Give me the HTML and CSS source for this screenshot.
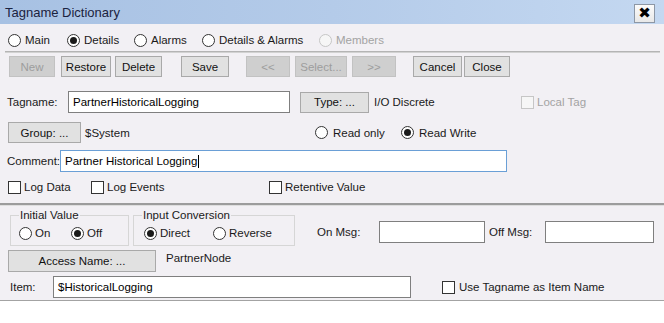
FILE: index.html
```html
<!DOCTYPE html>
<html>
<head>
<meta charset="utf-8">
<link rel="stylesheet" href="styles.css">
</head>
<body>
<div class="dialog">
  <div class="titlebar">
    <span class="title">Tagname Dictionary</span>
    <span class="closebtn">&#x2716;</span>
  </div>

  <div class="tabs">
    <label class="radio w-main"><span class="dot"></span>Main</label>
    <label class="radio w-details"><span class="dot on"></span>Details</label>
    <label class="radio w-alarms"><span class="dot"></span>Alarms</label>
    <label class="radio w-da"><span class="dot"></span>Details &amp; Alarms</label>
    <label class="radio disabled"><span class="dot"></span>Members</label>
  </div>
  <div class="sep-top"></div>

  <div class="toolbar">
    <span class="btn dis b-new">New</span>
    <span class="btn b-restore">Restore</span>
    <span class="btn b-delete">Delete</span>
    <span class="btn b-save">Save</span>
    <span class="btn dis b-prev">&lt;&lt;</span>
    <span class="btn dis b-select">Select...</span>
    <span class="btn dis b-next">&gt;&gt;</span>
    <span class="btn b-cancel">Cancel</span>
    <span class="btn b-close">Close</span>
  </div>

  <div class="row row-tag">
    <span class="lbl l-tag">Tagname:</span>
    <span class="input i-tag">PartnerHistoricalLogging</span>
    <span class="btn b-type">Type: ...</span>
    <span class="txt t-type">I/O Discrete</span>
    <label class="check disabled"><span class="box"></span>Local Tag</label>
  </div>

  <div class="row row-group">
    <span class="btn b-group">Group: ...</span>
    <span class="txt t-sys">$System</span>
    <label class="radio rw w-ro"><span class="dot"></span>Read only</label>
    <label class="radio rw"><span class="dot on"></span>Read Write</label>
  </div>

  <div class="row row-comment">
    <span class="lbl l-comment">Comment:</span>
    <span class="input focus i-comment">Partner Historical Logging<span class="caret"></span></span>
  </div>

  <div class="row row-checks">
    <label class="check w-logdata"><span class="box"></span>Log Data</label>
    <label class="check w-logevents"><span class="box"></span>Log Events</label>
    <label class="check"><span class="box"></span>Retentive Value</label>
  </div>

  <div class="sep-mid"></div>

  <div class="row row-boxes">
    <fieldset class="gbox g-init">
      <legend>Initial Value</legend>
      <div class="gbody">
        <label class="radio w-on"><span class="dot"></span>On</label>
        <label class="radio"><span class="dot on"></span>Off</label>
      </div>
    </fieldset>
    <fieldset class="gbox g-conv">
      <legend>Input Conversion</legend>
      <div class="gbody">
        <label class="radio w-direct"><span class="dot on"></span>Direct</label>
        <label class="radio"><span class="dot"></span>Reverse</label>
      </div>
    </fieldset>
    <div class="msgs">
      <span class="lbl l-on">On Msg:</span>
      <span class="input i-on"></span>
      <span class="lbl l-off">Off Msg:</span>
      <span class="input i-off"></span>
    </div>
  </div>

  <div class="row row-access">
    <span class="btn b-access">Access Name: ...</span>
    <span class="txt t-node">PartnerNode</span>
  </div>

  <div class="row row-item">
    <span class="lbl l-item">Item:</span>
    <span class="input i-item">$HistoricalLogging</span>
    <label class="check c-use"><span class="box"></span>Use Tagname as Item Name</label>
  </div>
</div>
</body>
</html>
```

FILE: styles.css
```css
* { box-sizing: border-box; }
html, body { margin: 0; padding: 0; background: #ffffff; }
body {
  font-family: "Liberation Sans", Arial, sans-serif;
  font-size: 11.5px;
  color: #1a1a1a;
  width: 664px;
  height: 323px;
  overflow: hidden;
}
.dialog {
  width: 664px;
  height: 301px;
  background: #f2f0f4;
  border-bottom: 1px solid #a3a3a3;
}

/* title bar */
.titlebar {
  height: 24px;
  display: flex;
  align-items: center;
  padding: 0 5px;
  background: linear-gradient(to right, #a7c1e3 0%, #b4cbe9 50%, #c4d8f1 100%);
}
.title { font-size: 13px; color: #1b2340; padding-top: 1px; }
.closebtn {
  margin-left: auto;
  margin-right: 4px;
  width: 21px;
  height: 19px;
  margin-top: 3px;
  display: flex;
  align-items: center;
  justify-content: center;
  background: linear-gradient(#fbfbfb, #e8e8e8);
  border: 1px solid #8d97a5;
  font-size: 15px;
  line-height: 1;
  color: #000;
  font-family: "DejaVu Sans", sans-serif;
}

/* radios / checks */
.radio, .check {
  display: inline-flex;
  align-items: center;
  white-space: nowrap;
}
.dot {
  width: 13px;
  height: 13px;
  border: 1px solid #333;
  border-radius: 50%;
  background: #fff;
  margin-right: 4px;
  flex: none;
  display: flex;
  align-items: center;
  justify-content: center;
}
.dot.on::after {
  content: "";
  width: 7px;
  height: 7px;
  border-radius: 50%;
  background: #1a1a1a;
}
.box {
  width: 13px;
  height: 13px;
  border: 1px solid #333;
  background: #fff;
  margin-right: 3px;
  flex: none;
}
.disabled { color: #a3a3a3; }
.disabled .dot, .disabled .box { border-color: #c6c6c6; background: #f6f6f6; }

.tabs {
  height: 27px;
  padding-top: 5px;
  padding-left: 8px;
  display: flex;
  align-items: center;
}
.w-main { width: 59px; }
.w-details { width: 67px; }
.w-alarms { width: 68px; }
.w-da { width: 117px; }

.sep-top {
  height: 2px;
  margin: 0 4px 0 5px;
  border-top: 1px solid #b4b4b4;
  border-bottom: 1px solid #d2d2d2;
}

/* buttons */
.btn {
  height: 21px;
  display: inline-flex;
  align-items: center;
  justify-content: center;
  background: #e1e1e1;
  border: 1px solid #a9a9a9;
  color: #111;
  flex: none;
}
.btn.dis { background: #cfcfcf; border-color: #c2c2c2; color: #9d9d9d; }

.toolbar {
  display: flex;
  padding-top: 3px;
  height: 24px;
}
.b-new { margin-left: 9px; width: 46px; }
.b-restore { margin-left: 6px; width: 50px; }
.b-delete { margin-left: 4px; width: 47px; }
.b-save { margin-left: 19px; width: 48px; }
.b-prev { margin-left: 17px; width: 44px; }
.b-select { margin-left: 5px; width: 52px; }
.b-next { margin-left: 5px; width: 44px; }
.b-cancel { margin-left: 17px; width: 49px; }
.b-close { margin-left: 2px; width: 46px; }

/* rows */
.row { display: flex; align-items: center; }
.lbl, .txt { white-space: nowrap; flex: none; }
.input {
  height: 22px;
  background: #fff;
  border: 1px solid #7f7f7f;
  display: flex;
  align-items: center;
  padding-left: 4px;
  color: #000;
  flex: none;
  white-space: nowrap;
}
.input.focus { border-color: #6a9fd6; }
.caret { display: inline-block; width: 1px; height: 13px; background: #000; margin-left: 1px; }

.row-tag { margin-top: 14px; height: 22px; padding-left: 7px; }
.l-tag { width: 61px; }
.i-tag { width: 222px; }
.b-type { margin-left: 10px; width: 69px; }
.t-type { margin-left: 5px; width: 147px; }

.row-group { margin-top: 9px; height: 21px; }
.b-group { margin-left: 8px; width: 73px; }
.t-sys { margin-left: 4px; width: 230px; }
.rw .dot { margin-right: 5px; }
.w-ro { width: 86px; }

.row-comment { margin-top: 7px; height: 22px; padding-left: 7px; }
.l-comment { width: 53px; }
.i-comment { width: 447px; }

.row-checks { margin-top: 8px; height: 14px; padding-left: 8px; }
.w-logdata { width: 83px; }
.w-logevents { width: 178px; }

.sep-mid {
  margin-top: 9px;
  height: 3px;
  border-top: 2px solid #9c9c9c;
  border-bottom: 1px solid #dedede;
}

/* group boxes */
.row-boxes { margin-top: 3px; height: 37px; align-items: flex-start; }
.gbox {
  margin: 0;
  border: 1px solid #d6d6d6;
  padding: 0 0 0 8px;
  height: 37px;
  flex: none;
}
.gbox legend {
  padding: 0 1px;
  line-height: 12px;
  color: #1a1a1a;
}
.g-init { margin-left: 10px; width: 119px; }
.g-conv { margin-left: 4px; width: 162px; padding-left: 10px; }
.g-conv legend { margin-left: -2px; }
.gbody { display: flex; align-items: center; height: 16px; margin-top: 4px; }
.w-on { width: 52px; }
.w-direct { width: 69px; }
.gbox .dot { margin-right: 3px; }

.msgs { display: flex; align-items: center; margin-top: 12px; }
.l-on { margin-left: 22px; width: 62px; }
.i-on { width: 106px; }
.l-off { margin-left: 4px; width: 56px; }
.i-off { width: 109px; }

.row-access { margin-top: 4px; height: 22px; align-items: flex-start; }
.b-access { margin-left: 8px; width: 148px; height: 22px; }
.t-node { margin-left: 10px; padding-top: 2px; }

.row-item { margin-top: 4px; height: 22px; }
.l-item { margin-left: 10px; width: 43px; }
.i-item { width: 358px; }
.c-use { margin-left: 31px; }
.c-use .box { margin-right: 4px; }
```
